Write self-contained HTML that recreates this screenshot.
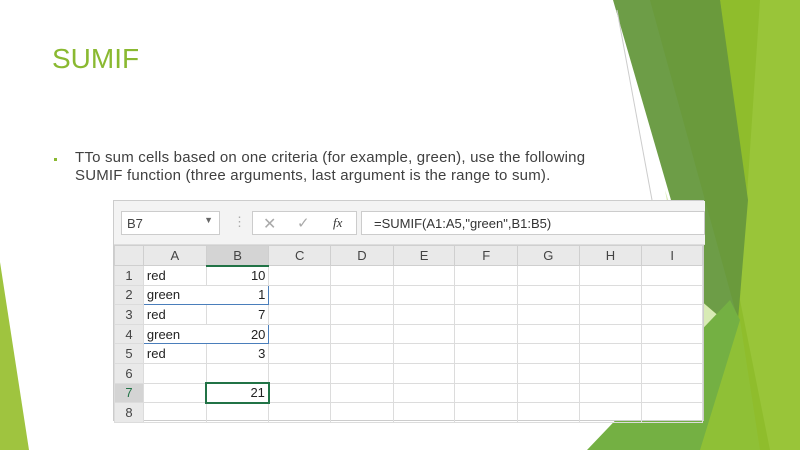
<!DOCTYPE html>
<html><head><style>
*{margin:0;padding:0;box-sizing:border-box}
body{width:800px;height:450px;overflow:hidden;background:#fff;position:relative;font-family:"Liberation Sans",sans-serif}
.t{position:absolute;left:52px;top:43px;font-size:28px;color:#8ab931}
.b{position:absolute;left:75px;top:149px;font-size:15px;letter-spacing:0.2px;color:#404040;line-height:18px;white-space:nowrap}
.dot{position:absolute;left:54px;top:158px;width:3px;height:3px;background:#8ab931}
.xl{position:absolute;left:113px;top:200px;width:591px;height:221px;background:#fff;border:1px solid #ccc;font-size:13px;color:#222}
.bar{position:absolute;left:0;top:0;width:591px;height:44px;background:#f3f3f3;border-bottom:1px solid #ddd}
.nb{position:absolute;left:7px;top:10px;width:99px;height:24px;background:#fff;border:1px solid #ccc;padding:4px 5px;color:#444}
.fb{position:absolute;left:138px;top:10px;width:105px;height:24px;background:#fff;border:1px solid #ccc;color:#aaa}
.fx{position:absolute;left:247px;top:10px;width:344px;height:24px;background:#fff;border:1px solid #ccc;padding:4px 12px;color:#333}
table{position:absolute;left:0;top:44px;border-collapse:collapse}
td{height:19.6px;border:1px solid #dcdcdc;padding:0 3px;font-size:13px;white-space:nowrap}
tr.h td{background:#e9e9e9;text-align:center;color:#444;height:20px;border-color:#cfcfcf}
td.r{background:#e9e9e9;text-align:center;color:#444;width:29px}
td.n{text-align:right}
</style></head><body>
<svg width="800" height="450" style="position:absolute;left:0;top:0">
<polygon points="0,262 0,450 29,450" fill="#9fc43f"/>
<polygon points="720,0 800,0 800,450 680,450" fill="#8fbd2c"/>
<polygon points="760,0 800,0 800,450 770,450 740,300" fill="#9cc93f" opacity=".7"/>
<polygon points="613,0 720,0 745,200 735,330 700,300" fill="#6d9d47"/>
<polygon points="650,0 720,0 748,200 738,320" fill="#6a9a3c"/>
<polygon points="665,190 700,300 735,330 690,330" fill="#d8ebb5"/>
<polygon points="587,450 730,300 740,320 720,450" fill="#74b043"/>
<polygon points="700,450 740,320 760,450" fill="#8fc036"/>
<line x1="617" y1="10" x2="652" y2="200" stroke="#ccc" stroke-width="1"/>
</svg>
<div class="t">SUMIF</div>
<div class="dot"></div>
<div class="b">TTo sum cells based on one criteria (for example, green), use the following<br>SUMIF function (three arguments, last argument is the range to sum).</div>
<div class="xl">
<div class="bar">
<div class="nb">B7<span style="position:absolute;right:6px;top:3px;font-size:9px;color:#666">▼</span></div>
<span style="position:absolute;left:119px;top:13px;color:#aaa">⋮</span>
<div class="fb"><span style="position:absolute;left:10px;top:2px;font-size:16px">✕</span><span style="position:absolute;left:44px;top:2px;font-size:15px">✓</span><span style="position:absolute;left:80px;top:3px;color:#333;font-style:italic;font-family:'Liberation Serif',serif">fx</span></div>
<div class="fx">=SUMIF(A1:A5,"green",B1:B5)</div>
</div>
<table>
<tr class="h"><td style="width:29px"></td><td style="width:63px">A</td><td style="width:63px;background:#d4d4d4;border-bottom:2px solid #217346">B</td><td style="width:62px">C</td><td style="width:63px">D</td><td style="width:62px">E</td><td style="width:63px">F</td><td style="width:62px">G</td><td style="width:63px">H</td><td style="width:61px">I</td></tr>
<tr><td class="r">1</td><td>red</td><td class="n">10</td><td></td><td></td><td></td><td></td><td></td><td></td><td></td></tr>
<tr><td class="r">2</td><td style="border:1.5px solid #4a7ebb;border-right:none">green</td><td class="n" style="border:1.5px solid #4a7ebb;border-left:none">1</td><td></td><td></td><td></td><td></td><td></td><td></td><td></td></tr>
<tr><td class="r">3</td><td>red</td><td class="n">7</td><td></td><td></td><td></td><td></td><td></td><td></td><td></td></tr>
<tr><td class="r">4</td><td style="border:1.5px solid #4a7ebb;border-right:none">green</td><td class="n" style="border:1.5px solid #4a7ebb;border-left:none">20</td><td></td><td></td><td></td><td></td><td></td><td></td><td></td></tr>
<tr><td class="r">5</td><td>red</td><td class="n">3</td><td></td><td></td><td></td><td></td><td></td><td></td><td></td></tr>
<tr><td class="r">6</td><td></td><td></td><td></td><td></td><td></td><td></td><td></td><td></td><td></td></tr>
<tr><td class="r" style="background:#d4d4d4;color:#217346">7</td><td></td><td class="n" style="border:2px solid #217346">21</td><td></td><td></td><td></td><td></td><td></td><td></td><td></td></tr>
<tr><td class="r">8</td><td></td><td></td><td></td><td></td><td></td><td></td><td></td><td></td><td></td></tr>
</table>
</div>
</body></html>
